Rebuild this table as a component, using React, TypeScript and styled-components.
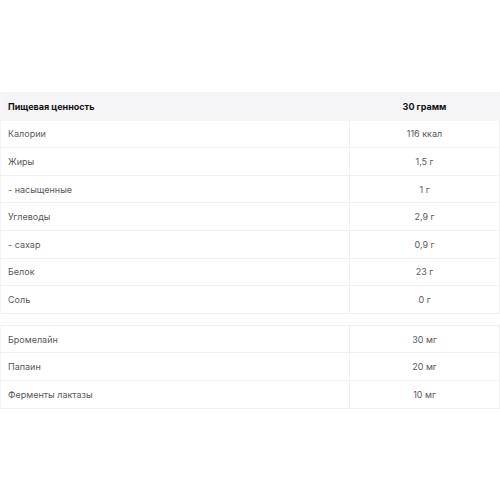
import React from "react";
import styled, { createGlobalStyle } from "styled-components";

const Global = createGlobalStyle`
  html, body { margin: 0; padding: 0; background: #fff; }
  body { font-family: Inter, "Noto Sans", sans-serif; }
`;

const Page = styled.div`
  width: 500px;
  height: 500px;
  padding-top: 92px;
  box-sizing: border-box;
  display: flex;
  flex-direction: column;
  gap: 11px;
`;

const Table = styled.table`
  width: 500px;
  border-collapse: collapse;
  table-layout: fixed;
  font-size: 9px;
`;

const Row = styled.tr<{ $head?: boolean }>`
  height: 27.6px;
  background: ${(p) => (p.$head ? "#f5f5f7" : "#fff")};
`;

const Name = styled.td<{ $head?: boolean }>`
  width: 349px;
  padding: 0 7px;
  border: 1px solid ${(p) => (p.$head ? "#f5f5f7" : "#f0f0f0")};
  border-left-color: #f7f7f7;
  color: ${(p) => (p.$head ? "#111" : "#595959")};
  font-weight: ${(p) => (p.$head ? 700 : 400)};
  box-sizing: border-box;
`;

const Value = styled.td<{ $head?: boolean }>`
  text-align: center;
  padding: 0;
  border: 1px solid ${(p) => (p.$head ? "#f5f5f7" : "#f0f0f0")};
  color: ${(p) => (p.$head ? "#111" : "#595959")};
  font-weight: ${(p) => (p.$head ? 700 : 400)};
`;

const main: [string, string][] = [
  ["Калории", "116 ккал"],
  ["Жиры", "1,5 г"],
  ["- насыщенные", "1 г"],
  ["Углеводы", "2,9 г"],
  ["- сахар", "0,9 г"],
  ["Белок", "23 г"],
  ["Соль", "0 г"],
];

const extra: [string, string][] = [
  ["Бромелайн", "30 мг"],
  ["Папаин", "20 мг"],
  ["Ферменты лактазы", "10 мг"],
];

export default function App() {
  return (
    <>
      <Global />
      <Page>
        <Table>
          <tbody>
            <Row $head>
              <Name $head>Пищевая ценность</Name>
              <Value $head>30 грамм</Value>
            </Row>
            {main.map(([n, v]) => (
              <Row key={n}>
                <Name>{n}</Name>
                <Value>{v}</Value>
              </Row>
            ))}
          </tbody>
        </Table>
        <Table>
          <tbody>
            {extra.map(([n, v]) => (
              <Row key={n}>
                <Name>{n}</Name>
                <Value>{v}</Value>
              </Row>
            ))}
          </tbody>
        </Table>
      </Page>
    </>
  );
}
